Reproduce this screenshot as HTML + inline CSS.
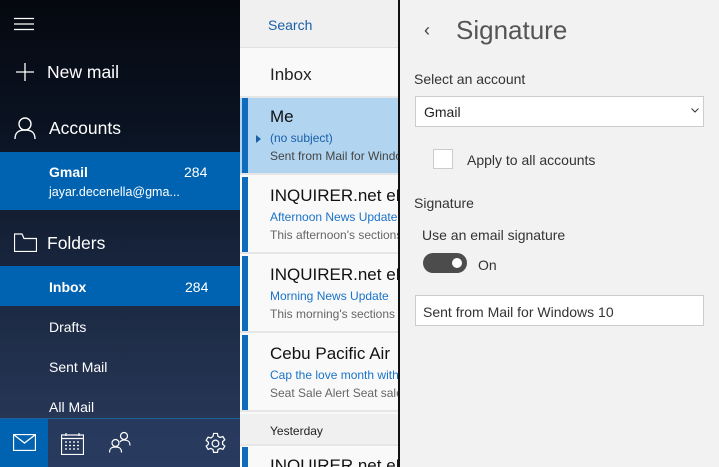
<!DOCTYPE html><html><head><style>
*{margin:0;padding:0;box-sizing:border-box}
body{width:719px;height:467px;overflow:hidden;font-family:"Liberation Sans",sans-serif;position:relative;background:#f2f2f2}
.a{position:absolute;white-space:nowrap}
#L{position:absolute;left:0;top:0;width:240px;height:467px;background:linear-gradient(180deg,#05080f 0%,#0b1424 30%,#1a2740 60%,#2a3b5c 100%);color:#fff;overflow:hidden}
#M{position:absolute;left:240px;top:0;width:158px;height:467px;background:#f9f9f9;overflow:hidden}
#B{position:absolute;left:398px;top:0;width:2px;height:467px;background:#111}
.it{position:absolute;left:0;width:159px;height:77px;border-bottom:2px solid #e6e6e6;overflow:hidden}
.it div{white-space:nowrap}
.it .bar{position:absolute;left:2px;top:0;width:6px;height:77px;background:#0f6cbd}
.it .t{position:absolute;left:30px;top:9px;font-size:17px;color:#111}
.it .s{position:absolute;left:30px;top:33px;font-size:12px;color:#1a73c8}
.it .p{position:absolute;left:30px;top:51px;font-size:12px;color:#666}
</style></head><body>
<div id="L">
 <svg class="a" style="left:14px;top:17px" width="20" height="14"><path d="M0 1.5H20M0 7H20M0 12.5H20" stroke="#fff" stroke-width="1.2"/></svg>
 <svg class="a" style="left:15px;top:63px" width="20" height="20"><path d="M10 0V18M1 9H19" stroke="#fff" stroke-width="1.3"/></svg>
 <div class="a" style="left:47px;top:62px;font-size:17.5px">New mail</div>
 <svg class="a" style="left:14px;top:117px" width="22" height="22" fill="none" stroke="#fff" stroke-width="1.4"><circle cx="11" cy="7" r="6"/><path d="M1 22C1 15 5 13 11 13S21 15 21 22"/></svg>
 <div class="a" style="left:49px;top:118px;font-size:17.5px">Accounts</div>
 <div class="a" style="left:0;top:152px;width:240px;height:58px;background:#0063b1"></div>
 <div class="a" style="left:49px;top:164px;font-size:14px;font-weight:bold">Gmail</div>
 <div class="a" style="left:184px;top:164px;font-size:14px">284</div>
 <div class="a" style="left:49px;top:185px;font-size:12.5px">jayar.decenella@gma...</div>
 <svg class="a" style="left:14px;top:233px" width="23" height="19" fill="none" stroke="#fff" stroke-width="1.2"><path d="M0.5 3.5V18.5H22.5V5.5H10L8 1H0.5Z"/></svg>
 <div class="a" style="left:47px;top:233px;font-size:17.5px">Folders</div>
 <div class="a" style="left:0;top:266px;width:240px;height:40px;background:#0063b1"></div>
 <div class="a" style="left:49px;top:279px;font-size:14px;font-weight:bold">Inbox</div>
 <div class="a" style="left:185px;top:279px;font-size:14px">284</div>
 <div class="a" style="left:49px;top:319px;font-size:14px">Drafts</div>
 <div class="a" style="left:49px;top:359px;font-size:14px">Sent Mail</div>
 <div class="a" style="left:49px;top:399px;font-size:14px">All Mail</div>
 <div class="a" style="left:0;top:418px;width:240px;height:49px;background:rgba(40,60,100,.5);border-top:1px solid #1f5f9a"></div>
 <div class="a" style="left:0;top:419px;width:48px;height:48px;background:#0063b1"></div>
 <svg class="a" style="left:13px;top:434px" width="23" height="17" fill="none" stroke="#fff" stroke-width="1.3"><rect x="0.5" y="0.5" width="22" height="16"/><path d="M0.5 0.5L11.5 9L22.5 0.5"/></svg>
 <svg class="a" style="left:61px;top:432px" width="23" height="23" fill="none" stroke="#fff" stroke-width="1.2"><rect x="0.5" y="3" width="22" height="19.5"/><path d="M0.5 6.5H22.5M5 1V4M18 1V4"/><g stroke-dasharray="2 2"><path d="M4 10H20M4 13.5H20M4 17H20"/></g></svg>
 <svg class="a" style="left:109px;top:431px" width="22" height="22" fill="none" stroke="#fff" stroke-width="1.2"><circle cx="6.5" cy="12" r="3.5"/><path d="M0.5 21.5C0.5 17 3 16 6.5 16S12.5 17 12.5 21.5"/><circle cx="15" cy="5" r="3.5"/><path d="M11 11C12 9.5 13 9 15 9C18.5 9 21 10 21 14.5"/></svg>
 <svg class="a" style="left:204px;top:432px" width="23" height="23" viewBox="0 0 24 24" fill="none" stroke="#fff" stroke-width="1.3"><circle cx="12" cy="12" r="3.5"/><path d="M10 1.5h4l.6 3 2.2 1.2 2.9-1 2 3.4-2.3 2v2.6l2.3 2-2 3.4-2.9-1-2.2 1.2-.6 3h-4l-.6-3-2.2-1.2-2.9 1-2-3.4 2.3-2V10.7L2.3 8.7l2-3.4 2.9 1L9.4 4.5z"/></svg>
</div>
<div id="M">
 <div class="a" style="left:0;top:0;width:159px;height:48px;background:#f0f0f0;border-bottom:1px solid #e0e0e0"></div>
 <div class="a" style="left:28px;top:17px;font-size:14px;color:#1a5fa8">Search</div>
 <div class="a" style="left:30px;top:65px;font-size:17px;color:#222">Inbox</div>
 <div class="a" style="left:0;top:96px;width:159px;height:2px;background:#e6e6e6"></div>
 <div class="it" style="top:98px;background:#b1d5f0"><div class="bar"></div><div class="t">Me</div><div class="s" style="color:#1a5fa8">(no subject)</div><div class="p" style="color:#444">Sent from Mail for Windows 10</div>
  <svg class="a" style="left:16px;top:37px" width="5" height="8"><path d="M0 0L5 4L0 8Z" fill="#1a5fa8"/></svg></div>
 <div class="it" style="top:177px"><div class="bar"></div><div class="t">INQUIRER.net eNewsletter</div><div class="s">Afternoon News Update</div><div class="p">This afternoon's sections</div></div>
 <div class="it" style="top:256px"><div class="bar"></div><div class="t">INQUIRER.net eNewsletter</div><div class="s">Morning News Update</div><div class="p">This morning's sections</div></div>
 <div class="it" style="top:335px"><div class="bar"></div><div class="t">Cebu Pacific Air</div><div class="s">Cap the love month with</div><div class="p">Seat Sale Alert Seat sale</div></div>
 <div class="a" style="left:0;top:414px;width:159px;height:32px;background:#f0f0f0;border-bottom:2px solid #e6e6e6"></div>
 <div class="a" style="left:30px;top:424px;font-size:12px;color:#222">Yesterday</div>
 <div class="it" style="top:447px"><div class="bar"></div><div class="t">INQUIRER.net eNewsletter</div></div>
</div>
<div id="B"></div>
<div class="a" style="left:424px;top:20px;font-size:18px;color:#444">‹</div>
<div class="a" style="left:456px;top:15px;font-size:26px;color:#555">Signature</div>
<div class="a" style="left:414px;top:71px;font-size:14px;color:#333">Select an account</div>
<div class="a" style="left:415px;top:96px;width:289px;height:31px;background:#fff;border:1px solid #ccc"></div>
<div class="a" style="left:424px;top:104px;font-size:14px;color:#222">Gmail</div>
<svg class="a" style="left:691px;top:108px" width="8" height="5"><path d="M0.5 0.5L4 4L7.5 0.5" stroke="#333" fill="none"/></svg>
<div class="a" style="left:433px;top:149px;width:20px;height:20px;background:#fff;border:1px solid #ccc"></div>
<div class="a" style="left:467px;top:152px;font-size:14px;color:#333">Apply to all accounts</div>
<div class="a" style="left:414px;top:195px;font-size:14px;color:#333">Signature</div>
<div class="a" style="left:422px;top:227px;font-size:14px;color:#333">Use an email signature</div>
<div class="a" style="left:423px;top:253px;width:44px;height:20px;border-radius:10px;background:#4c4c4c"></div>
<div class="a" style="left:452px;top:258px;width:10px;height:10px;border-radius:5px;background:#fff"></div>
<div class="a" style="left:478px;top:257px;font-size:14px;color:#333">On</div>
<div class="a" style="left:415px;top:295px;width:289px;height:31px;background:#fff;border:1px solid #ccc"></div>
<div class="a" style="left:423px;top:304px;font-size:14px;color:#333">Sent from Mail for Windows 10</div>
</body></html>
